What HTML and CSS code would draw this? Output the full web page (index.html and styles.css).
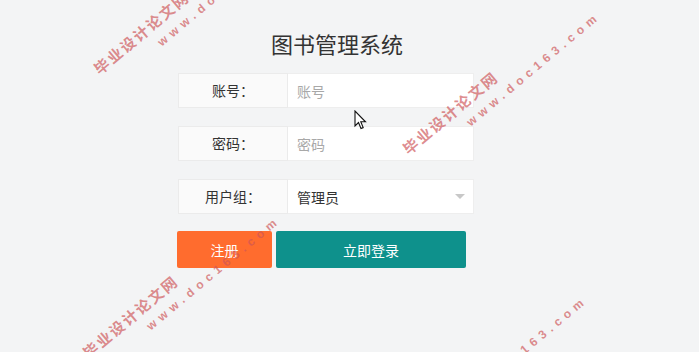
FILE: index.html
```html
<!DOCTYPE html>
<html lang="zh-CN">
<head>
<meta charset="utf-8">
<title>图书管理系统</title>
<link rel="stylesheet" href="styles.css">
</head>
<body>
<div class="screen">
  <div class="page">
    <h1 class="title">图书管理系统</h1>
    <form class="form">
      <div class="row">
        <label class="label">账号：</label>
        <input class="field" type="text" placeholder="账号">
      </div>
      <div class="row">
        <label class="label">密码：</label>
        <input class="field" type="password" placeholder="密码">
      </div>
      <div class="row">
        <label class="label">用户组：</label>
        <div class="field select"><span>管理员</span><i class="arrow"></i></div>
      </div>
      <div class="actions">
        <button type="button" class="btn btn-reg">注册</button>
        <button type="button" class="btn btn-login">立即登录</button>
      </div>
    </form>
  </div>

  <div class="wm wm-1"><div class="wm-cn">毕业设计论文网</div><div class="wm-en">www.doc163.com</div></div>
  <div class="wm wm-2"><div class="wm-cn">毕业设计论文网</div><div class="wm-en">www.doc163.com</div></div>
  <div class="wm wm-3"><div class="wm-cn">毕业设计论文网</div><div class="wm-en">www.doc163.com</div></div>
  <div class="wm wm-4"><div class="wm-cn">毕业设计论文网</div><div class="wm-en">www.doc163.com</div></div>

  <svg class="cursor" width="13" height="21" viewBox="0 0 13 21">
    <path d="M1 1 L1 16 L4.5 12.5 L7 18.5 L9.2 17.6 L6.8 11.8 L11.5 11.8 Z" fill="#fff" stroke="#111" stroke-width="1.1" stroke-linejoin="miter"/>
  </svg>
</div>
</body>
</html>
```

FILE: styles.css
```css
html, body {
  margin: 0;
  padding: 0;
  overflow: hidden;
}
body {
  background: #f3f4f5;
  font-family: "Noto Sans CJK SC", "Noto Sans", sans-serif;
  color: #333;
}
.screen {
  width: 699px;
  height: 352px;
  overflow: hidden;
  position: relative;
  background: #f3f4f5;
}
.page {
  padding: 28px 0 0 178px;
}
.title {
  width: 318px;
  margin: 0 0 15px;
  text-align: center;
  font-size: 22px;
  line-height: 30px;
  font-weight: normal;
  color: #333;
}
.form {
  display: flex;
  flex-direction: column;
  gap: 18px;
  width: 296px;
  margin: 0;
}
.row {
  display: flex;
  height: 35px;
}
.label {
  box-sizing: border-box;
  width: 110px;
  height: 35px;
  border: 1px solid #ebebeb;
  background: #fafafa;
  text-align: center;
  font-size: 14px;
  line-height: 33px;
  color: #333;
}
.field {
  box-sizing: border-box;
  flex: 1;
  height: 35px;
  margin: 0;
  border: 1px solid #eeeeee;
  border-left: 0;
  background: #fff;
  padding: 0 10px 0 9px;
  font-family: "Noto Sans CJK SC", "Noto Sans", sans-serif;
  font-size: 14px;
  color: #333;
  outline: none;
}
.field::placeholder {
  color: #a8a8a8;
}
.select {
  display: flex;
  align-items: center;
}
.arrow {
  margin-left: auto;
  margin-right: -2px;
  margin-top: -1px;
  width: 0;
  height: 0;
  border-left: 5px solid transparent;
  border-right: 5px solid transparent;
  border-top: 5px solid #c8c8c8;
}
.actions {
  display: flex;
  gap: 4px;
  margin: -1px 0 0 -1px;
}
.btn {
  height: 37px;
  border: 0;
  border-radius: 2px;
  color: #fff;
  font-family: "Noto Sans CJK SC", "Noto Sans", sans-serif;
  font-size: 14px;
  padding: 0;
  cursor: pointer;
}
.btn-reg {
  width: 95px;
  background: #ff6c2e;
}
.btn-login {
  width: 190px;
  background: #0e918c;
}
.wm {
  position: absolute;
  transform: rotate(-40deg);
  transform-origin: 0 0;
  color: rgba(206, 84, 88, 0.68);
  white-space: nowrap;
  pointer-events: none;
}
.wm-cn {
  font-family: "Noto Sans CJK SC", sans-serif;
  font-weight: bold;
  font-size: 15px;
  line-height: 18px;
  letter-spacing: 2px;
}
.wm-en {
  font-family: "Liberation Sans", Arial, sans-serif;
  font-weight: bold;
  font-size: 12px;
  line-height: 14px;
  letter-spacing: 5px;
  padding-left: 66px;
  margin-top: 4px;
}
.wm-1 { left: 90px; top: 64px; }
.wm-2 { left: 399px; top: 144px; }
.wm-3 { left: 79px; top: 348px; }
.wm-4 { left: 386px; top: 428px; }
.cursor {
  position: absolute;
  left: 354px;
  top: 110px;
}
```
